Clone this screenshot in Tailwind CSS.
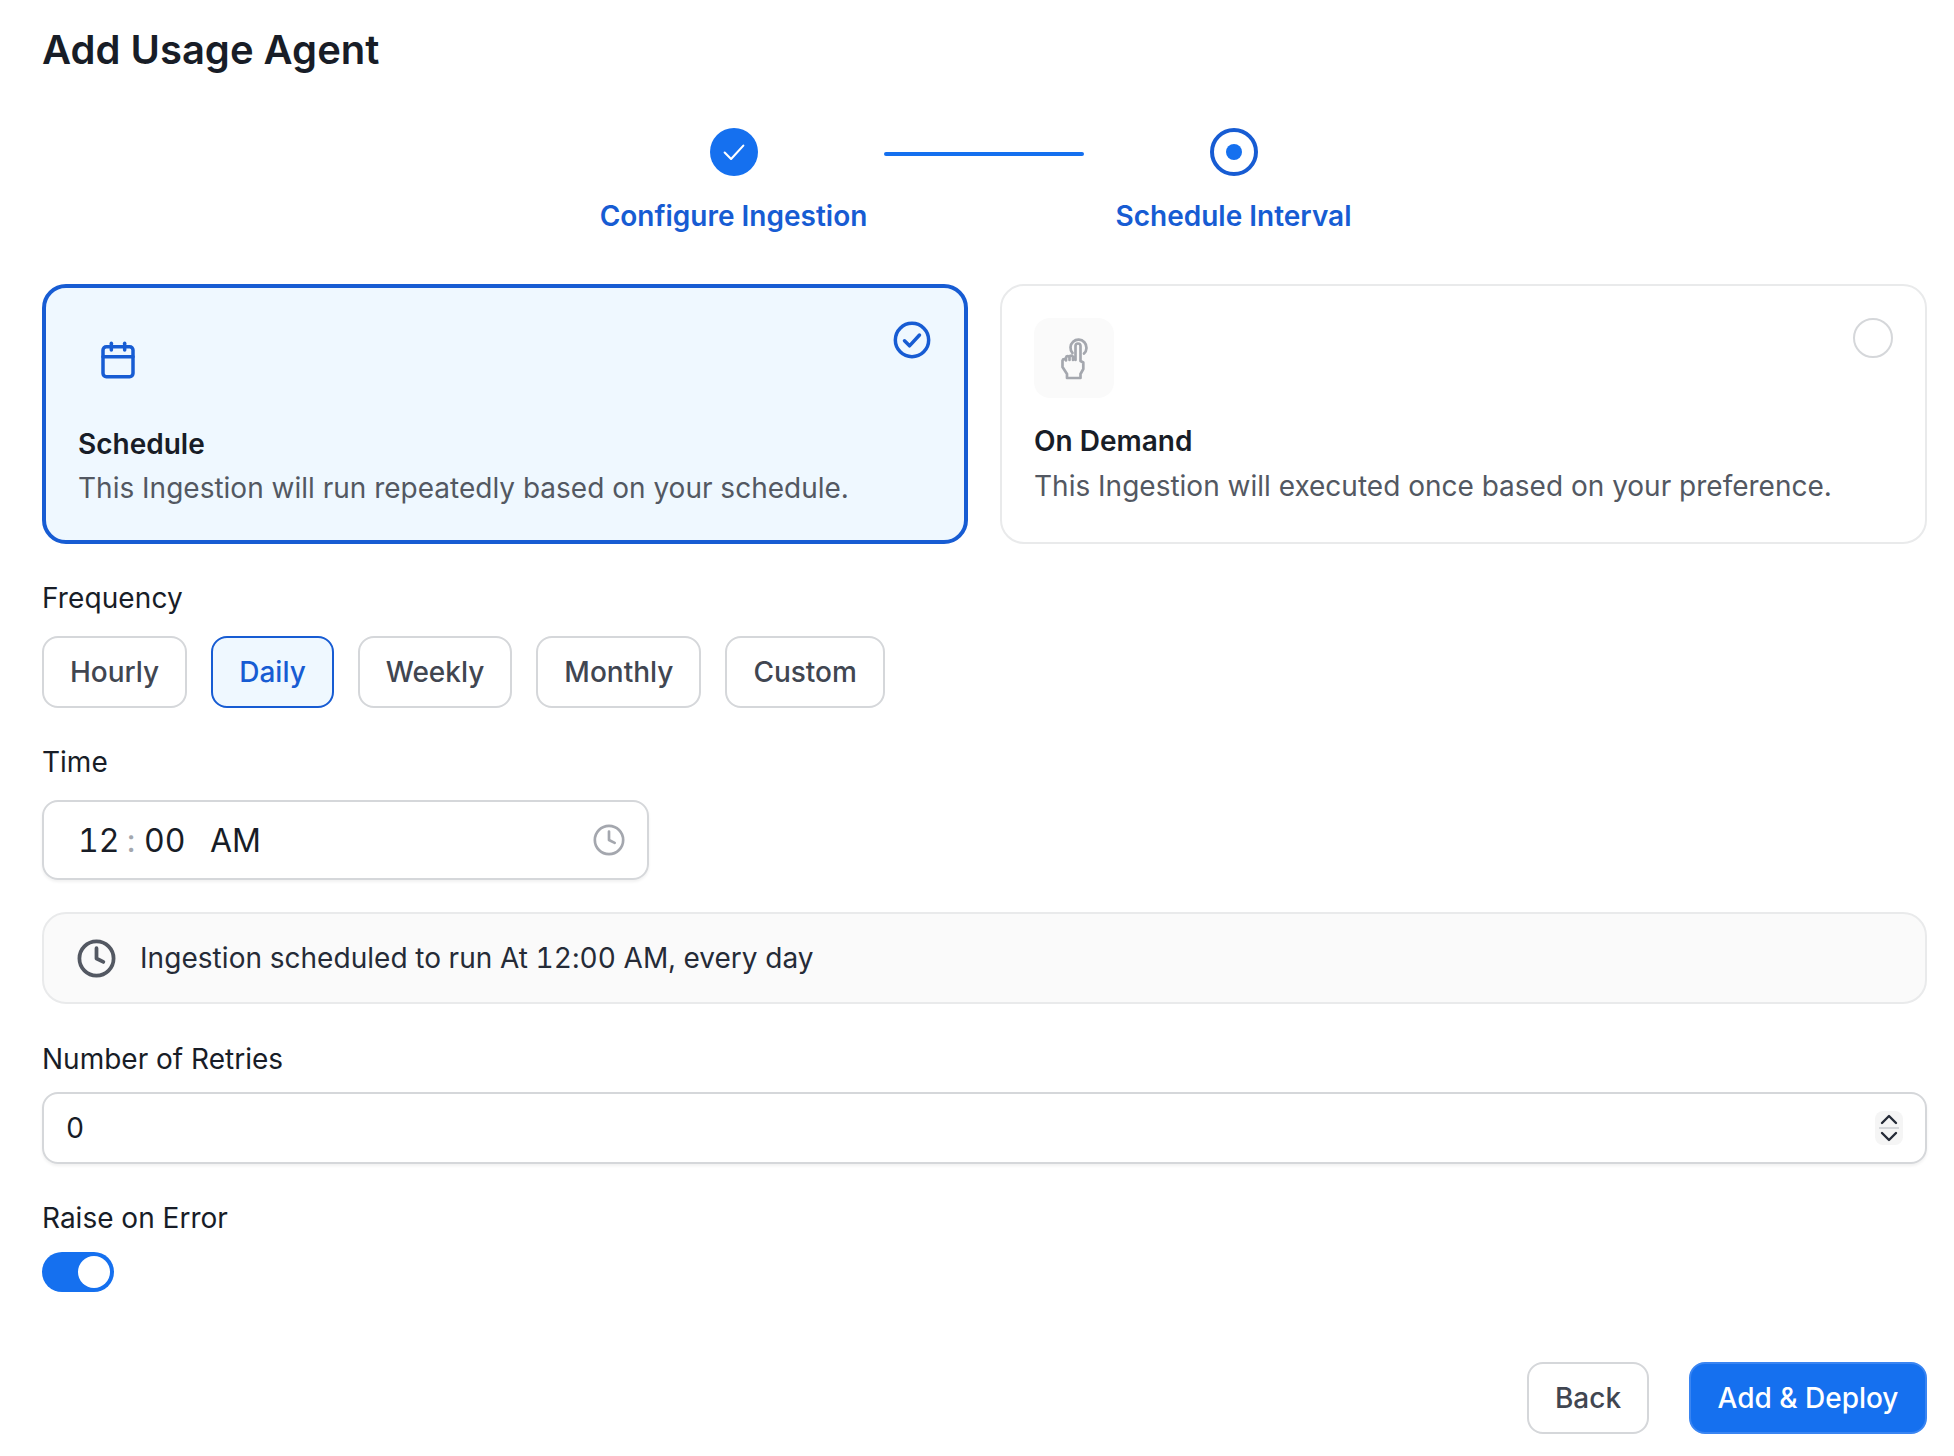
<!doctype html>
<html lang="en">
<head>
<meta charset="utf-8">
<title>Add Usage Agent</title>
<script src="https://cdn.jsdelivr.net/npm/@tailwindcss/browser@4"></script>
</head>
<body class="bg-white [font-family:Inter,sans-serif] text-[#181D27]">
<main class="pl-[42px] pr-[27px] w-[1954px] h-[1456px] overflow-hidden">
  <h1 class="h-[100px] flex items-center text-[40px] font-semibold">Add Usage Agent</h1>

  <section class="mt-[28px] mr-[2px] flex justify-center">
    <div class="w-[300px] flex flex-col items-center">
      <div class="size-12 rounded-full bg-[#1570EF] flex items-center justify-center">
        <svg class="size-7" viewBox="0 0 24 24" fill="none" stroke="white" stroke-width="1.800" stroke-linecap="round" stroke-linejoin="round"><path d="M4 12.500 9.500 18 20 6.500"/></svg>
      </div>
      <div class="mt-[20px] h-10 flex items-center text-[28px] font-semibold text-[#175CD3]">Configure Ingestion</div>
    </div>
    <div class="w-[200px] h-1 mt-[24px] rounded-full bg-[#1570EF]"></div>
    <div class="w-[300px] flex flex-col items-center">
      <div class="size-12 rounded-full border-4 border-[#175CD3] flex items-center justify-center">
        <div class="size-4 rounded-full bg-[#1570EF]"></div>
      </div>
      <div class="mt-[20px] h-10 flex items-center text-[28px] font-semibold text-[#175CD3]">Schedule Interval</div>
    </div>
  </section>

  <section class="mt-[48px] grid grid-cols-[926px_927px] gap-[32px]">
    <div class="relative h-[260px] rounded-[24px] border-4 border-[#175CD3] bg-[#EFF8FF] pl-[32px] pt-[32px]">
      <div class="size-20 flex items-center justify-center">
        <svg class="size-10" viewBox="0 0 24 24" fill="none" stroke="#175CD3" stroke-width="2.100" stroke-linecap="round" stroke-linejoin="round"><path d="M8 2v4"/><path d="M16 2v4"/><rect x="3" y="4" width="18" height="18" rx="2"/><path d="M3 10h18"/></svg>
      </div>
      <div class="mt-[24px] text-[28px] leading-[40px] font-semibold">Schedule</div>
      <div class="mt-[4px] text-[28px] leading-[40px] text-[#535862]">This Ingestion will run repeatedly based on your schedule.</div>
      <svg class="absolute top-[32px] right-[32px] size-10" viewBox="0 0 24 24" fill="none" stroke="#175CD3" stroke-width="2.100" stroke-linecap="round" stroke-linejoin="round"><circle cx="12" cy="12" r="10"/><path d="m7.500 12.500 3 3 6-6.500"/></svg>
    </div>
    <div class="relative h-[260px] rounded-[24px] border-2 border-[#E9EAEB] bg-white pl-[32px] pt-[32px]">
      <div class="size-20 rounded-[16px] bg-[#FAFAFA] flex items-center justify-center">
        <svg class="w-[30px] h-[44px]" viewBox="0 0 30 44" fill="none" stroke="#A4A7AE" stroke-width="2.700" stroke-linecap="round" stroke-linejoin="round"><path d="M13.500 17a8 8 0 1 1 11.500 .500"/><path d="M16.500 24V10a2.500 2.500 0 0 1 5 0v15l2.800 1.500V33l-2.800 5v4H8v-4l-4.500-7v-6.500a1.800 1.800 0 0 1 3.500 0V24v-2.500a1.800 1.800 0 0 1 3.500 0V24v-3a1.800 1.800 0 0 1 3.500 0V24"/></svg>
      </div>
      <div class="mt-[23px] text-[28px] leading-[40px] font-semibold">On Demand</div>
      <div class="mt-[5px] text-[28px] leading-[40px] text-[#535862]">This Ingestion will executed once based on your preference.</div>
      <div class="absolute top-[32px] right-[32px] size-10 rounded-full border-2 border-[#D5D7DA]"></div>
    </div>
  </section>

  <label class="mt-[34px] h-10 flex items-center text-[28px] tracking-[0.1px]">Frequency</label>
  <div class="mt-[18px] flex gap-[24px]">
    <div class="h-[72px] px-[26px] flex items-center rounded-[16px] border-2 border-[#D5D7DA] text-[28px] font-medium text-[#414651]">Hourly</div>
    <div class="h-[72px] px-[26px] flex items-center rounded-[16px] border-2 border-[#175CD3] bg-[#EFF8FF] text-[28px] font-medium text-[#175CD3]">Daily</div>
    <div class="h-[72px] px-[26px] flex items-center rounded-[16px] border-2 border-[#D5D7DA] text-[28px] font-medium text-[#414651]">Weekly</div>
    <div class="h-[72px] px-[26px] flex items-center rounded-[16px] border-2 border-[#D5D7DA] text-[28px] font-medium text-[#414651]">Monthly</div>
    <div class="h-[72px] px-[26px] flex items-center rounded-[16px] border-2 border-[#D5D7DA] text-[28px] font-medium text-[#414651]">Custom</div>
  </div>

  <label class="mt-[34px] h-10 flex items-center text-[28px]">Time</label>
  <div class="mt-[18px] w-[607px] h-20 pl-[34px] pr-[21px] pt-[2px] flex items-center rounded-[16px] border-2 border-[#D5D7DA] shadow-[0_2px_3px_rgba(10,13,18,0.06)] text-[32px] tabular-nums">
    <span class="w-[40px]">12</span>
    <span class="w-[26px] text-center text-[#A4A7AE]">:</span>
    <span class="w-[66px]">00</span>
    <span>AM</span>
    <svg class="ml-auto -mt-[2px] size-[34px]" viewBox="0 0 24 24" fill="none" stroke="#A4A7AE" stroke-width="1.900" stroke-linecap="round" stroke-linejoin="round"><circle cx="12" cy="12" r="10"/><path d="M12 6v6l4 2"/></svg>
  </div>

  <div class="mt-[32px] h-[92px] pl-[32px] flex items-center gap-[23px] rounded-[24px] border-2 border-[#E9EAEB] bg-[#FAFAFA] text-[28px] text-[#252B37] tabular-nums tracking-[0.05px]">
    <svg class="size-[41px]" viewBox="0 0 24 24" fill="none" stroke="#535862" stroke-width="2.200" stroke-linecap="round" stroke-linejoin="round"><circle cx="12" cy="12" r="10"/><path d="M12 6v6l4 2"/></svg>
    <span>Ingestion scheduled to run At 12:00 AM, every day</span>
  </div>

  <label class="mt-[35px] h-10 flex items-center text-[28px]">Number of Retries</label>
  <div class="mt-[13px] h-[72px] pl-[22px] pr-[22px] flex items-center justify-between rounded-[16px] border-2 border-[#D5D7DA] shadow-[0_2px_3px_rgba(10,13,18,0.06)] text-[28px] tabular-nums">
    <span>0</span>
    <div class="w-[28px] h-[34px] rounded-[8px] bg-[#F5F5F5] flex flex-col items-center justify-center">
      <svg class="w-[18px] h-[11px]" viewBox="0 0 18 11" fill="none" stroke="#252B37" stroke-width="2.400" stroke-linecap="round" stroke-linejoin="round"><path d="M2 9l7-7 7 7"/></svg>
      <div class="w-[20px] h-[2px] my-[2px] bg-[#D5D7DA]"></div>
      <svg class="w-[18px] h-[11px]" viewBox="0 0 18 11" fill="none" stroke="#252B37" stroke-width="2.400" stroke-linecap="round" stroke-linejoin="round"><path d="M2 2l7 7 7-7"/></svg>
    </div>
  </div>

  <label class="mt-[34px] h-10 flex items-center text-[28px]">Raise on Error</label>
  <div class="mt-[14px] w-[72px] h-10 p-1 rounded-full bg-[#1570EF] flex justify-end">
    <div class="size-8 rounded-full bg-white"></div>
  </div>

  <footer class="mt-[70px] flex justify-end gap-[40px]">
    <button class="h-[72px] w-[122px] rounded-[16px] border-2 border-[#D5D7DA] text-[28px] font-medium text-[#414651]">Back</button>
    <button class="h-[72px] w-[238px] rounded-[16px] border-2 border-[#3A85F2] bg-[#1570EF] text-[28px] font-medium text-white">Add &amp; Deploy</button>
  </footer>
</main>
</body>
</html>
